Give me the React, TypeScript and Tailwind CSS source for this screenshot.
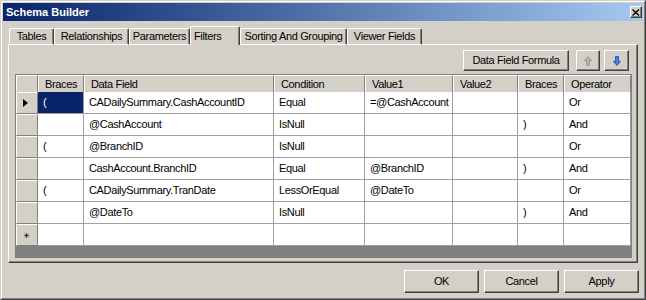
import React from "react";

type Row = {
  braceOpen: string;
  field: string;
  condition: string;
  value1: string;
  value2: string;
  braceClose: string;
  operator: string;
};

const ROWS: Row[] = [
  { braceOpen: "(", field: "CADailySummary.CashAccountID", condition: "Equal", value1: "=@CashAccount", value2: "", braceClose: "", operator: "Or" },
  { braceOpen: "", field: "@CashAccount", condition: "IsNull", value1: "", value2: "", braceClose: ")", operator: "And" },
  { braceOpen: "(", field: "@BranchID", condition: "IsNull", value1: "", value2: "", braceClose: "", operator: "Or" },
  { braceOpen: "", field: "CashAccount.BranchID", condition: "Equal", value1: "@BranchID", value2: "", braceClose: ")", operator: "And" },
  { braceOpen: "(", field: "CADailySummary.TranDate", condition: "LessOrEqual", value1: "@DateTo", value2: "", braceClose: "", operator: "Or" },
  { braceOpen: "", field: "@DateTo", condition: "IsNull", value1: "", value2: "", braceClose: ")", operator: "And" },
];

const HEADERS = ["Braces", "Data Field", "Condition", "Value1", "Value2", "Braces", "Operator"];

const TABS = [
  { label: "Tables", w: "w-[45px]" },
  { label: "Relationships", w: "w-[75px]" },
  { label: "Parameters", w: "w-[61px]" },
  { label: "Filters", w: "w-[50px]", active: true },
  { label: "Sorting And Grouping", w: "w-[107px]" },
  { label: "Viewer Fields", w: "w-[75px]" },
];

const COLS = "grid grid-cols-[22px_46px_190px_91px_88px_65px_46px_67px]";

function Btn({ className, children }: { className?: string; children?: React.ReactNode }) {
  return (
    <div
      className={`flex items-center justify-center border border-t-white border-l-white border-r-[#404040] border-b-[#404040] bg-[#d4d0c8] shadow-[inset_-1px_-1px_#808080] text-black ${className ?? ""}`}
    >
      {children}
    </div>
  );
}

function ArrowUp({ color, dark }: { color: string; dark: string }) {
  return (
    <svg width="8" height="10" viewBox="0 0 8 10">
      <path d="M4 0.5 L7.5 4.5 L5.5 4.5 L5.5 9.5 L2.5 9.5 L2.5 4.5 L0.5 4.5 Z" fill={color} stroke={dark} strokeWidth="0.8" />
    </svg>
  );
}

function ArrowDown({ color, dark }: { color: string; dark: string }) {
  return (
    <svg width="8" height="10" viewBox="0 0 8 10">
      <path d="M2.5 0.5 L5.5 0.5 L5.5 5.5 L7.5 5.5 L4 9.5 L0.5 5.5 L2.5 5.5 Z" fill={color} stroke={dark} strokeWidth="0.8" />
    </svg>
  );
}

function Cell({ text, selected }: { text: string; selected?: boolean }) {
  return (
    <div
      className={`flex h-[22px] items-center border-r border-b border-[#a0a0a0] pl-[5px] whitespace-nowrap overflow-hidden ${
        selected ? "bg-[#0a246a] text-white" : "bg-white text-black"
      }`}
    >
      {text}
    </div>
  );
}

function RowHead({ mark }: { mark?: "current" | "new" }) {
  return (
    <div className="flex h-[22px] items-center justify-center border-t border-l border-t-white border-l-white border-r border-b border-r-[#808080] border-b-[#808080] bg-[#d4d0c8]">
      {mark === "current" && (
        <svg width="5" height="8" viewBox="0 0 5 8" className="mr-[3px]">
          <path d="M0 0 L5 4 L0 8 Z" fill="#000" />
        </svg>
      )}
      {mark === "new" && (
        <svg width="7" height="7" viewBox="0 0 7 7" className="mr-[2px]">
          <circle cx="3.5" cy="3.5" r="3" fill="#b8b8b8" />
          <path d="M3.5 1 L4.2 2.8 L6 3.5 L4.2 4.2 L3.5 6 L2.8 4.2 L1 3.5 L2.8 2.8 Z" fill="#202020" />
        </svg>
      )}
    </div>
  );
}

export default function App() {
  return (
    <div
      className="w-[646px] h-[300px] border border-t-[#d4d0c8] border-l-[#d4d0c8] border-r-[#404040] border-b-[#404040] bg-[#d4d0c8] text-[11px] tracking-[-0.35px] text-black"
      style={{ fontFamily: '"Liberation Sans", Arial, sans-serif' }}
    >
      <div className="flex h-full flex-col border border-t-white border-l-white border-r-[#808080] border-b-[#808080] p-px">
        {/* title bar */}
        <div className="flex h-[18px] items-center justify-between bg-gradient-to-r from-[#0a246a] to-[#a6caf0] pl-[3px] pr-px">
          <span className="font-bold text-white tracking-[0px]">Schema Builder</span>
          <Btn className="h-[12px] w-[12px]">
            <svg width="8" height="7" viewBox="0 0 8 7">
              <path d="M0.5 0.5 L7 6.5 M7 0.5 L0.5 6.5" stroke="#000" strokeWidth="1.4" />
            </svg>
          </Btn>
        </div>

        {/* tabs */}
        <div className="relative z-10 mt-[5px] -mb-px flex items-end pl-[6px]">
          {TABS.map((t) =>
            t.active ? (
              <div
                key={t.label}
                className={`${t.w} h-[19px] rounded-t-[2px] border-t border-l border-t-white border-l-white border-r border-r-[#404040] shadow-[inset_-1px_0_#808080] bg-[#d4d0c8] pl-[3px] pt-[1px]`}
              >
                {t.label}
              </div>
            ) : (
              <div
                key={t.label}
                className={`${t.w} flex h-[17px] items-center justify-center rounded-t-[2px] border-t border-l border-t-white border-l-white border-r border-r-[#404040] shadow-[inset_-1px_0_#808080] border-b border-b-white bg-[#d4d0c8]`}
              >
                {t.label}
              </div>
            )
          )}
        </div>

        {/* tab panel */}
        <div className="mx-[5px] flex h-[219px] flex-col border border-t-white border-l-white border-r-[#404040] border-b-[#404040] shadow-[inset_-1px_-1px_#808080] pl-[6px] pt-[5px]">
          <div className="flex justify-end gap-[4px] pr-[8px]">
            <Btn className="h-[21px] w-[106px] mr-[3px]">Data Field Formula</Btn>
            <Btn className="h-[21px] w-[24px]">
              <ArrowUp color="#b4b4b4" dark="#909090" />
            </Btn>
            <Btn className="h-[21px] w-[25px]">
              <ArrowDown color="#3d7fe6" dark="#1848a8" />
            </Btn>
          </div>

          {/* data grid */}
          <div className="mt-[3px] flex w-[617px] h-[184px] flex-col border border-[#808080] bg-[#808080]">
            <div className={`${COLS} h-[17px]`}>
              <div className="border-t border-l border-t-white border-l-white border-r border-b border-r-[#808080] border-b-[#808080] bg-[#d4d0c8]" />
              {HEADERS.map((h, i) => (
                <div
                  key={i}
                  className="flex items-center border-t border-l border-t-white border-l-white border-r border-b border-r-[#808080] border-b-[#808080] bg-[#d4d0c8] pl-[6px] whitespace-nowrap"
                >
                  {h}
                </div>
              ))}
            </div>
            {ROWS.map((r, i) => (
              <div key={i} className={COLS}>
                <RowHead mark={i === 0 ? "current" : undefined} />
                <Cell text={r.braceOpen} selected={i === 0} />
                <Cell text={r.field} />
                <Cell text={r.condition} />
                <Cell text={r.value1} />
                <Cell text={r.value2} />
                <Cell text={r.braceClose} />
                <Cell text={r.operator} />
              </div>
            ))}
            <div className={COLS}>
              <RowHead mark="new" />
              <Cell text="" />
              <Cell text="" />
              <Cell text="" />
              <Cell text="" />
              <Cell text="" />
              <Cell text="" />
              <Cell text="" />
            </div>
          </div>
        </div>

        {/* dialog buttons */}
        <div className="mt-[7px] flex justify-end gap-[5px] pr-[4px]">
          <Btn className="h-[23px] w-[75px]">OK</Btn>
          <Btn className="h-[23px] w-[75px]">Cancel</Btn>
          <Btn className="h-[23px] w-[75px]">Apply</Btn>
        </div>
      </div>
    </div>
  );
}
